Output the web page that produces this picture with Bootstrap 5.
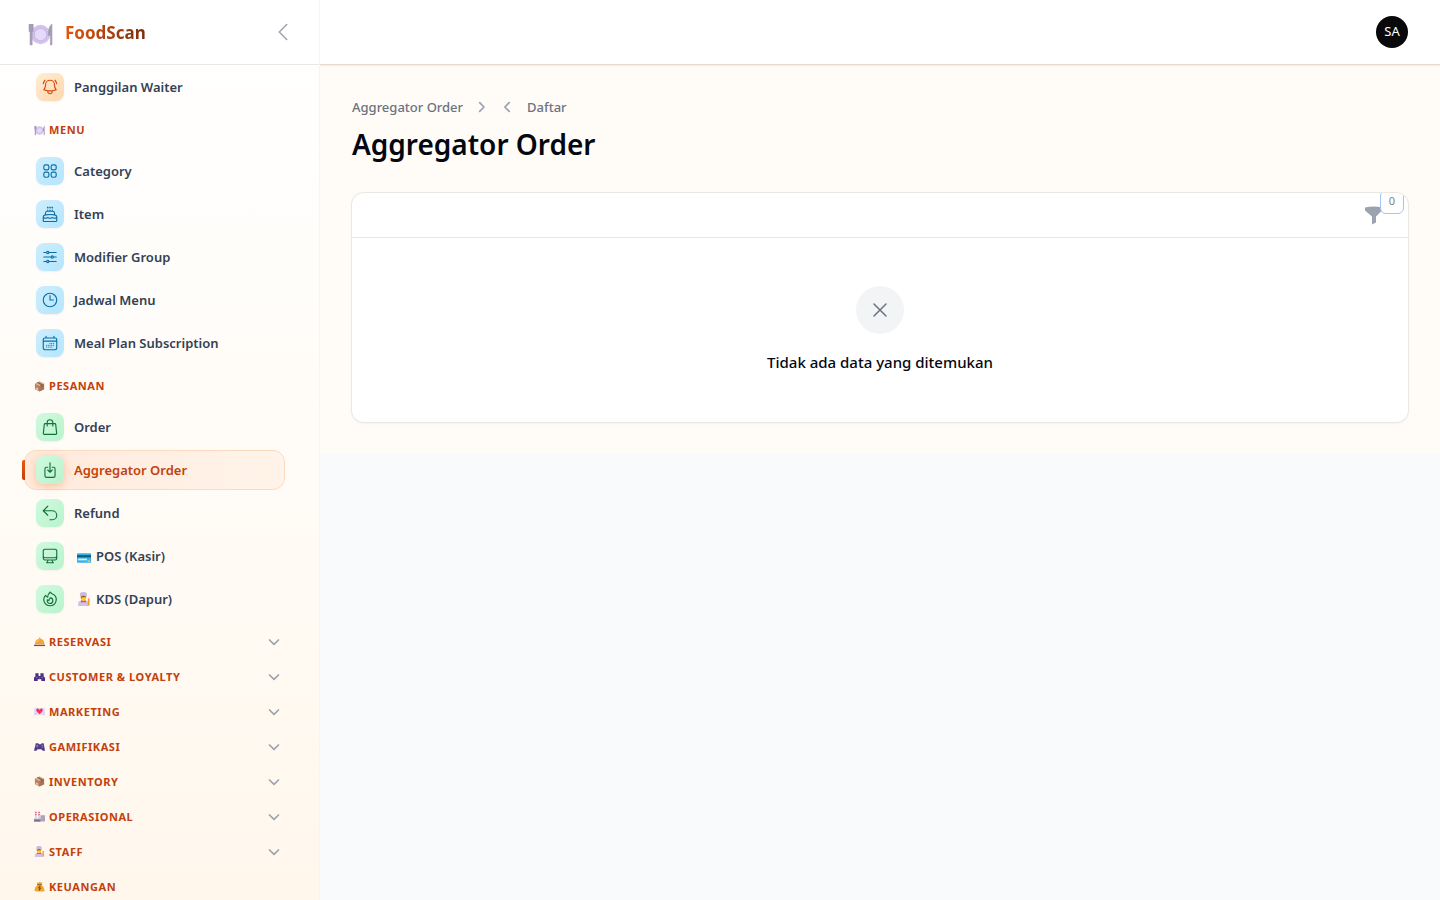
<!DOCTYPE html>
<html lang="id">
<head>
<meta charset="utf-8">
<meta name="viewport" content="width=device-width, initial-scale=1">
<title>Aggregator Order - FoodScan</title>
<link href="https://cdn.jsdelivr.net/npm/bootstrap@5.3.0/dist/css/bootstrap.min.css" rel="stylesheet">
<style>
  body { font-family: "Noto Sans", "Segoe UI", sans-serif; background: #f8fafc; color: #030712; }
  svg { display: block; flex: none; }
  .ln { fill: none; stroke: currentColor; stroke-width: 1.5; stroke-linecap: round; stroke-linejoin: round; }
  .side { width: 320px; background: linear-gradient(180deg, #fff 0%, #fffcf7 50%, #fff7ec 100%); border-right: 1px solid #fcf3ea; }
  .side-top { height: 65px; padding: 0 24px 0 28px; background: #fff; border-bottom: 1px solid #e8e8e8; }
  .side-toggle { color: #9ca3af; }
  .brand { font-size: 17px; font-weight: 700; line-height: 24px; padding-top: 2px; background: linear-gradient(90deg, #ea580c, #7c2d12); -webkit-background-clip: text; background-clip: text; color: transparent; }
  .side-body { padding: 2px 34px 0 24px; }
  .side-list { display: grid; gap: 3px; }
  .side-link { height: 40px; padding: 0 11px; gap: 10px; border: 1px solid transparent; border-radius: 12px; font-size: 13px; font-weight: 600; line-height: 20px; color: #334155; }
  .side-link.active { color: #c2410c; background: linear-gradient(90deg, #ffeadc, #fff4ea); border-color: #fdd9bd; }
  .side-link.active::before { content: ""; position: absolute; left: -3px; top: 9px; width: 3px; height: 20px; background: linear-gradient(180deg, #ea580c, #c2410c); border-radius: 2px 0 0 2px; }
  .emoji-text { gap: 5px; padding-left: 3px; }
  .tile { width: 28px; height: 28px; border-radius: 8px; display: grid; place-items: center; flex: none; box-shadow: 0 1px 2px rgba(0,0,0,.05); }
  .tile-amber { background: linear-gradient(135deg, #ffedd5, #fed7aa); color: #d9480f; }
  .tile-sky { background: linear-gradient(135deg, #cdeefe, #b5e5fd); color: #0b6ea5; }
  .tile-green { background: linear-gradient(135deg, #cffadf, #b9f3cd); color: #16703a; }
  .active .tile { box-shadow: 0 2px 8px rgba(234,88,12,.3); }
  .group-head { height: 44px; padding: 2px 10px 0; gap: 4px; font-size: 11px; font-weight: 700; line-height: 16px; letter-spacing: .05em; color: #c2410c; }
  .group-folds .group-head { height: 35px; padding-right: 5px; }
  .group-head .chev { color: #9ca3af; }
  .top { height: 65px; padding: 0 32px; border-bottom: 1px solid #ead9d0; background: #fff; box-shadow: 0 1px 1px #f7ece5; }
  .avatar { width: 32px; height: 32px; background: #09090b; color: #fff; font-size: 13px; }
  .page { background: #fffcf7; padding: 32px; }
  .crumbs { font-size: 13px; font-weight: 500; line-height: 20px; color: #6b7280; gap: 12px; }
  .crumbs svg { color: #9ca3af; }
  .page-title { font-size: 28px; font-weight: 650; line-height: 36px; margin: 9px 0 31px; }
  .panel { background: #fff; border-radius: 12px; overflow: hidden; box-shadow: 0 0 0 1px #ebe8e4, 0 1px 3px rgba(0,0,0,.08); }
  .panel-tools { height: 45px; border-bottom: 1px solid #e5e7eb; padding-right: 26px; }
  .filter-btn { color: #9ca3af; }
  .filter-count { position: absolute; left: 15px; bottom: 11px; width: 24px; height: 24px; border: 1px solid #a3c4fa; border-radius: 6px; background: #fff; color: #7b8290; font-size: 11px; line-height: 20px; }
  .empty { padding: 48px 24px; }
  .empty-mark { width: 48px; height: 48px; background: #f3f4f6; color: #6b7280; }
  .empty-text { font-size: 15px; font-weight: 500; line-height: 24px; margin-top: 16px; }
</style>
</head>
<body>
<svg width="0" height="0" class="position-absolute" aria-hidden="true">
  <defs>
    <symbol id="plate" viewBox="0 0 24 24"><circle cx="12" cy="12" r="9.300" fill="#d2c2ef"/><circle cx="12" cy="12" r="6" fill="#e5daf7" stroke="#c8b6e8"/><path d="M1 2v6q0 2 1 2v12h2V10q1 0 1-2V2M3 2v7M23 2q-4 3-3.500 11h2v9H23z" fill="#a79bb4" stroke="#a79bb4" stroke-width=".6"/></symbol>
    <symbol id="box" viewBox="0 0 24 24"><path d="M12 1 22 6v12l-10 5L2 18V6z" fill="#b98160"/><path d="M12 1 22 6l-10 5L2 6z" fill="#dfb58f"/><path d="M12 11v12l10-5V6z" fill="#a87458"/><path d="m6 4 10 5v5l3-1.500V7L9 2z" fill="#8a6150"/><path d="m4 14 5 2v4l-5-2z" fill="#e9c7b0"/></symbol>
    <symbol id="card-pay" viewBox="0 0 24 24"><rect y="4" width="24" height="16" rx="1" fill="#35b3ed"/><path d="M0 7h24v4H0z" fill="#155e80"/><path d="M2 13h15v3H2z" fill="#d8eef9"/><path d="M18 16h4v3h-4z" fill="#fbc531"/></symbol>
    <symbol id="cook" viewBox="0 0 24 24"><path d="M2 24v-6q2-4 9-4t9 4v6z" fill="#cfc1e8"/><circle cx="11" cy="9" r="5" fill="#fcc21b"/><path d="M5 8V3q0-3 6-3t6 3v5q-6-3-12 0z" fill="#cbb9df"/><path d="M7 8q4-3 8 0v3H7z" fill="#9b4b35"/><path d="M8 9h7v5q-4 2-7 0z" fill="#ffcc22"/><path d="m7 14 4 2 4-2v4l-4-1-4 1z" fill="#e83b63"/><path d="M20 11v12" stroke="#f09a36" stroke-width="3"/></symbol>
    <symbol id="bell-desk" viewBox="0 0 24 24"><path d="M2 18Q3 7 11 6V3h3v3q8 1 9 12z" fill="#f7a139"/><path d="M6 14q1-5 6-6" stroke="#ffd083" stroke-width="2" fill="none"/><path d="M0 19h24v3H0z" fill="#83503f"/></symbol>
    <symbol id="people" viewBox="0 0 24 24"><path d="M0 22v-8l3-2V5h7v6h4V5h7v7l3 2v8h-8v-4H8v4z" fill="#4c3180"/><path d="M4 14h4M16 14h4M11 15h2" stroke="#8872bb" stroke-width="2"/></symbol>
    <symbol id="love" viewBox="0 0 24 24"><path d="M0 4h24v16H0z" fill="#e4daf2"/><path d="m0 20 9-8M24 20l-9-8" stroke="#c5b4df"/><path d="M12 18 5 11V7l3-2 4 3 4-3 3 2v4z" fill="#f8315e"/></symbol>
    <symbol id="pad" viewBox="0 0 24 24"><path d="M4 5h5l2 2h4l2-2h4l3 16h-5l-3-3H8l-3 3H0z" fill="#51398a"/><path d="M7 8v6M4 11h6" stroke="#9381c6" stroke-width="2"/><path d="M18 8v3" stroke="#f6544e" stroke-width="3"/><path d="M18 12v2" stroke="#42aaf0" stroke-width="3"/></symbol>
    <symbol id="plant" viewBox="0 0 24 24"><path d="M2 20V1h4v19M9 20V1h4v19" fill="#ddd2e3"/><path d="M2 3h4M2 8h4M9 3h4M9 8h4" stroke="#e05881" stroke-width="2"/><path d="M0 23v-6h14V9h10v14z" fill="#aaa5b8"/><path d="M0 19h14v4H0z" fill="#77718b"/></symbol>
    <symbol id="purse" viewBox="0 0 24 24"><path d="M8 8 6 3l4 1 3-3 2 3 4-1-3 5q7 5 7 12 0 3-3 3H5q-4 0-4-4 0-6 7-11z" fill="#f6a52c"/><path d="M7 8h10" stroke="#865229" stroke-width="2"/><path d="M15 13q-5-2-5 1t4 2-4 3M12 11v10" stroke="#805016" stroke-width="2" fill="none"/></symbol>
    <symbol id="down" viewBox="0 0 12 12"><path d="m1.500 4 4.500 4.300L10.500 4" fill="none" stroke="currentColor" stroke-width="1.700" stroke-linecap="round" stroke-linejoin="round"/></symbol>
  </defs>
</svg>

<div class="d-flex vh-100 overflow-hidden">
  <aside class="side d-flex flex-column flex-shrink-0">
    <div class="side-top d-flex align-items-center flex-shrink-0">
      <svg width="25" height="25" class="mt-1"><use href="#plate"/></svg>
      <a href="#" class="brand text-decoration-none ms-2 ps-1">FoodScan</a>
      <button type="button" class="side-toggle btn border-0 p-0 ms-auto" aria-label="Tutup menu">
        <svg width="24" height="24" viewBox="0 0 24 24" class="ln"><path d="M15.750 19.500 8.250 12l7.500-7.500"/></svg>
      </button>
    </div>
    <nav class="side-body flex-grow-1 overflow-hidden" aria-label="Menu utama">
      <div class="side-list">
        <a href="#" class="side-link d-flex align-items-center text-decoration-none"><span class="tile tile-amber"><svg width="18" height="18" viewBox="0 0 24 24" class="ln"><path d="M14.860 17.080a23.850 23.850 0 0 0 5.450-1.310A8.970 8.970 0 0 1 18 9.750V9A6 6 0 0 0 6 9v.750a8.970 8.970 0 0 1-2.310 6.020c1.730.640 3.560 1.080 5.450 1.310m5.720 0a24.260 24.260 0 0 1-5.720 0m5.720 0a3 3 0 1 1-5.720 0M3.120 7.500A8.970 8.970 0 0 1 5.290 3m13.420 0a8.970 8.970 0 0 1 2.170 4.500"/></svg></span>Panggilan Waiter</a>
      </div>
      <div class="group-head d-flex align-items-center"><svg width="11" height="11"><use href="#plate"/></svg>MENU</div>
      <div class="side-list">
        <a href="#" class="side-link d-flex align-items-center text-decoration-none"><span class="tile tile-sky"><svg width="18" height="18" viewBox="0 0 24 24" class="ln"><rect x="3.750" y="3.750" width="6.750" height="6.750" rx="2.250"/><rect x="13.500" y="3.750" width="6.750" height="6.750" rx="2.250"/><rect x="3.750" y="13.500" width="6.750" height="6.750" rx="2.250"/><rect x="13.500" y="13.500" width="6.750" height="6.750" rx="2.250"/></svg></span>Category</a>
        <a href="#" class="side-link d-flex align-items-center text-decoration-none"><span class="tile tile-sky"><svg width="18" height="18" viewBox="0 0 24 24" class="ln"><path d="M12 8.250v-1.500m0 1.500c-1.350 0-2.700.050-4.020.160C6.850 8.510 6 9.470 6 10.610v2.510m6-4.870c1.350 0 2.700.050 4.020.160 1.130.100 1.980 1.060 1.980 2.200v2.510M15 8.250v-1.500m-6 1.500v-1.500m12 9.750-1.500.750a3.350 3.350 0 0 1-3 0 3.350 3.350 0 0 0-3 0 3.350 3.350 0 0 1-3 0 3.350 3.350 0 0 0-3 0 3.350 3.350 0 0 1-3 0L3 16.500m15-3.380A48 48 0 0 0 6 13.120m12 0c1.950.250 3 1.350 3 2.800v4.950c0 .620-.500 1.130-1.120 1.130H4.120C3.500 22 3 21.500 3 20.870v-4.950c0-1.450 1.050-2.550 3-2.800M12.270 3.120a.380.380 0 1 1-.540 0L12 2.850zm-3 0a.380.380 0 1 1-.540 0L9 2.850zm6 0a.380.380 0 1 1-.540 0l.270-.270z"/></svg></span>Item</a>
        <a href="#" class="side-link d-flex align-items-center text-decoration-none"><span class="tile tile-sky"><svg width="18" height="18" viewBox="0 0 24 24" class="ln"><path d="M10.500 6h9.750M3.750 6H7.500m3 0a1.500 1.500 0 1 1-3 0 1.500 1.500 0 0 1 3 0zm0 12h9.750M3.750 18H7.500m3 0a1.500 1.500 0 1 1-3 0 1.500 1.500 0 0 1 3 0zM3.750 12h9.750m3 0h3.750m-3.750 0a1.500 1.500 0 1 1-3 0 1.500 1.500 0 0 1 3 0z"/></svg></span>Modifier Group</a>
        <a href="#" class="side-link d-flex align-items-center text-decoration-none"><span class="tile tile-sky"><svg width="18" height="18" viewBox="0 0 24 24" class="ln"><path d="M12 6v6h4.500M21 12a9 9 0 1 1-18 0 9 9 0 0 1 18 0z"/></svg></span>Jadwal Menu</a>
        <a href="#" class="side-link d-flex align-items-center text-decoration-none"><span class="tile tile-sky"><svg width="18" height="18" viewBox="0 0 24 24" class="ln"><path d="M6.750 3v2.250M17.250 3v2.250M3 18.750V7.500a2.250 2.250 0 0 1 2.250-2.250h13.500A2.250 2.250 0 0 1 21 7.500v11.250A2.250 2.250 0 0 1 18.750 21H5.250A2.250 2.250 0 0 1 3 18.750zM3 9.500h18M12 12.750h.010M12 15h.010M12 17.250h.010M9.750 15h.010M9.750 17.250h.010M7.500 15h.010M7.500 17.250h.010M14.250 12.750h.010M14.250 15h.010M14.250 17.250h.010M16.500 12.750h.010M16.500 15h.010"/></svg></span>Meal Plan Subscription</a>
      </div>
      <div class="group-head d-flex align-items-center"><svg width="11" height="11"><use href="#box"/></svg>PESANAN</div>
      <div class="side-list">
        <a href="#" class="side-link d-flex align-items-center text-decoration-none"><span class="tile tile-green"><svg width="18" height="18" viewBox="0 0 24 24" class="ln"><path d="M15.750 10.500V6a3.750 3.750 0 1 0-7.500 0v4.500M19.600 8.500l1.270 12c.070.660-.450 1.250-1.120 1.250H4.250c-.670 0-1.190-.590-1.120-1.250l1.270-12A1.120 1.120 0 0 1 5.510 7.500h12.970c.580 0 1.060.430 1.120 1z"/></svg></span>Order</a>
        <a href="#" class="side-link active position-relative d-flex align-items-center text-decoration-none" aria-current="page"><span class="tile tile-green"><svg width="18" height="18" viewBox="0 0 24 24" class="ln"><path d="M9 8.250H7.500a2.250 2.250 0 0 0-2.250 2.250v9a2.250 2.250 0 0 0 2.250 2.250h9a2.250 2.250 0 0 0 2.250-2.250v-9a2.250 2.250 0 0 0-2.250-2.250H15M9 12l3 3m0 0 3-3m-3 3V2.250"/></svg></span>Aggregator Order</a>
        <a href="#" class="side-link d-flex align-items-center text-decoration-none"><span class="tile tile-green"><svg width="18" height="18" viewBox="0 0 24 24" class="ln"><path d="M9 15 3 9m0 0 6-6M3 9h12a6 6 0 0 1 0 12h-3"/></svg></span>Refund</a>
        <a href="#" class="side-link d-flex align-items-center text-decoration-none"><span class="tile tile-green"><svg width="18" height="18" viewBox="0 0 24 24" class="ln"><path d="M9 17.250v1.010a3 3 0 0 1-.880 2.120L7.500 21h9l-.620-.620a3 3 0 0 1-.880-2.120v-1.010m6-12V15a2.250 2.250 0 0 1-2.250 2.250H5.250A2.250 2.250 0 0 1 3 15V5.250m18 0A2.250 2.250 0 0 0 18.750 3H5.250A2.250 2.250 0 0 0 3 5.250m18 0V12a2.250 2.250 0 0 1-2.250 2.250H5.250A2.250 2.250 0 0 1 3 12V5.250"/></svg></span><span class="emoji-text d-flex align-items-center"><svg width="14" height="14" class="mt-1"><use href="#card-pay"/></svg>POS (Kasir)</span></a>
        <a href="#" class="side-link d-flex align-items-center text-decoration-none"><span class="tile tile-green"><svg width="18" height="18" viewBox="0 0 24 24" class="ln"><path d="M15.360 5.210A8.250 8.250 0 0 1 12 21 8.250 8.250 0 0 1 6.040 7.050 8.290 8.290 0 0 0 9 9.600a8.980 8.980 0 0 1 3.360-6.870 8.210 8.210 0 0 0 3 2.480z"/><path d="M12 18a3.750 3.750 0 0 0 .500-7.470 5.990 5.990 0 0 0-1.930 3.550 5.970 5.970 0 0 1-2.130-1A3.750 3.750 0 0 0 12 18z"/></svg></span><span class="emoji-text d-flex align-items-center"><svg width="14" height="14"><use href="#cook"/></svg>KDS (Dapur)</span></a>
      </div>
      <div class="group-folds pt-1">
        <button type="button" class="group-head btn border-0 rounded-0 w-100 d-flex align-items-center" aria-expanded="false"><svg width="11" height="11"><use href="#bell-desk"/></svg>RESERVASI<svg width="12" height="12" class="chev ms-auto"><use href="#down"/></svg></button>
        <button type="button" class="group-head btn border-0 rounded-0 w-100 d-flex align-items-center" aria-expanded="false"><svg width="11" height="11"><use href="#people"/></svg>CUSTOMER &amp; LOYALTY<svg width="12" height="12" class="chev ms-auto"><use href="#down"/></svg></button>
        <button type="button" class="group-head btn border-0 rounded-0 w-100 d-flex align-items-center" aria-expanded="false"><svg width="11" height="11"><use href="#love"/></svg>MARKETING<svg width="12" height="12" class="chev ms-auto"><use href="#down"/></svg></button>
        <button type="button" class="group-head btn border-0 rounded-0 w-100 d-flex align-items-center" aria-expanded="false"><svg width="11" height="11"><use href="#pad"/></svg>GAMIFIKASI<svg width="12" height="12" class="chev ms-auto"><use href="#down"/></svg></button>
        <button type="button" class="group-head btn border-0 rounded-0 w-100 d-flex align-items-center" aria-expanded="false"><svg width="11" height="11"><use href="#box"/></svg>INVENTORY<svg width="12" height="12" class="chev ms-auto"><use href="#down"/></svg></button>
        <button type="button" class="group-head btn border-0 rounded-0 w-100 d-flex align-items-center" aria-expanded="false"><svg width="11" height="11"><use href="#plant"/></svg>OPERASIONAL<svg width="12" height="12" class="chev ms-auto"><use href="#down"/></svg></button>
        <button type="button" class="group-head btn border-0 rounded-0 w-100 d-flex align-items-center" aria-expanded="false"><svg width="11" height="11"><use href="#cook"/></svg>STAFF<svg width="12" height="12" class="chev ms-auto"><use href="#down"/></svg></button>
        <div class="group-head d-flex align-items-center"><svg width="11" height="11"><use href="#purse"/></svg>KEUANGAN</div>
      </div>
    </nav>
  </aside>

  <div class="flex-grow-1 overflow-auto">
    <header class="top d-flex align-items-center justify-content-end position-relative">
      <button type="button" class="avatar btn border-0 rounded-circle p-0" aria-label="Menu pengguna SA">SA</button>
    </header>
    <main class="page">
      <nav class="crumbs d-flex align-items-center" aria-label="breadcrumb">
        <a href="#" class="text-reset text-decoration-none">Aggregator Order</a>
        <svg width="14" height="14" viewBox="0 0 12 12" class="ln"><path d="m4 2.300 3.700 3.700L4 9.700"/></svg>
        <svg width="14" height="14" viewBox="0 0 12 12" class="ln"><path d="M7 2.300 3.300 6 7 9.700"/></svg>
        <a href="#" class="text-reset text-decoration-none">Daftar</a>
      </nav>
      <h1 class="page-title">Aggregator Order</h1>
      <section class="panel">
        <div class="panel-tools d-flex align-items-center justify-content-end">
          <button type="button" class="filter-btn btn border-0 p-0 position-relative" aria-label="Filter">
            <svg width="17" height="19" viewBox="0 0 17 19"><path d="M0 1.500Q8.500-.5 17 1.500v3L11 10.500v6L7 18.500v-8L0 4.500z" fill="currentColor"/></svg>
            <span class="filter-count">0</span>
          </button>
        </div>
        <div class="empty d-flex flex-column align-items-center">
          <div class="empty-mark rounded-circle d-grid align-items-center justify-content-center">
            <svg width="24" height="24" viewBox="0 0 24 24" class="ln"><path d="M6 18 18 6M6 6l12 12"/></svg>
          </div>
          <div class="empty-text">Tidak ada data yang ditemukan</div>
        </div>
      </section>
    </main>
  </div>
</div>
<script src="https://cdn.jsdelivr.net/npm/bootstrap@5.3.0/dist/js/bootstrap.bundle.min.js"></script>
</body>
</html>
